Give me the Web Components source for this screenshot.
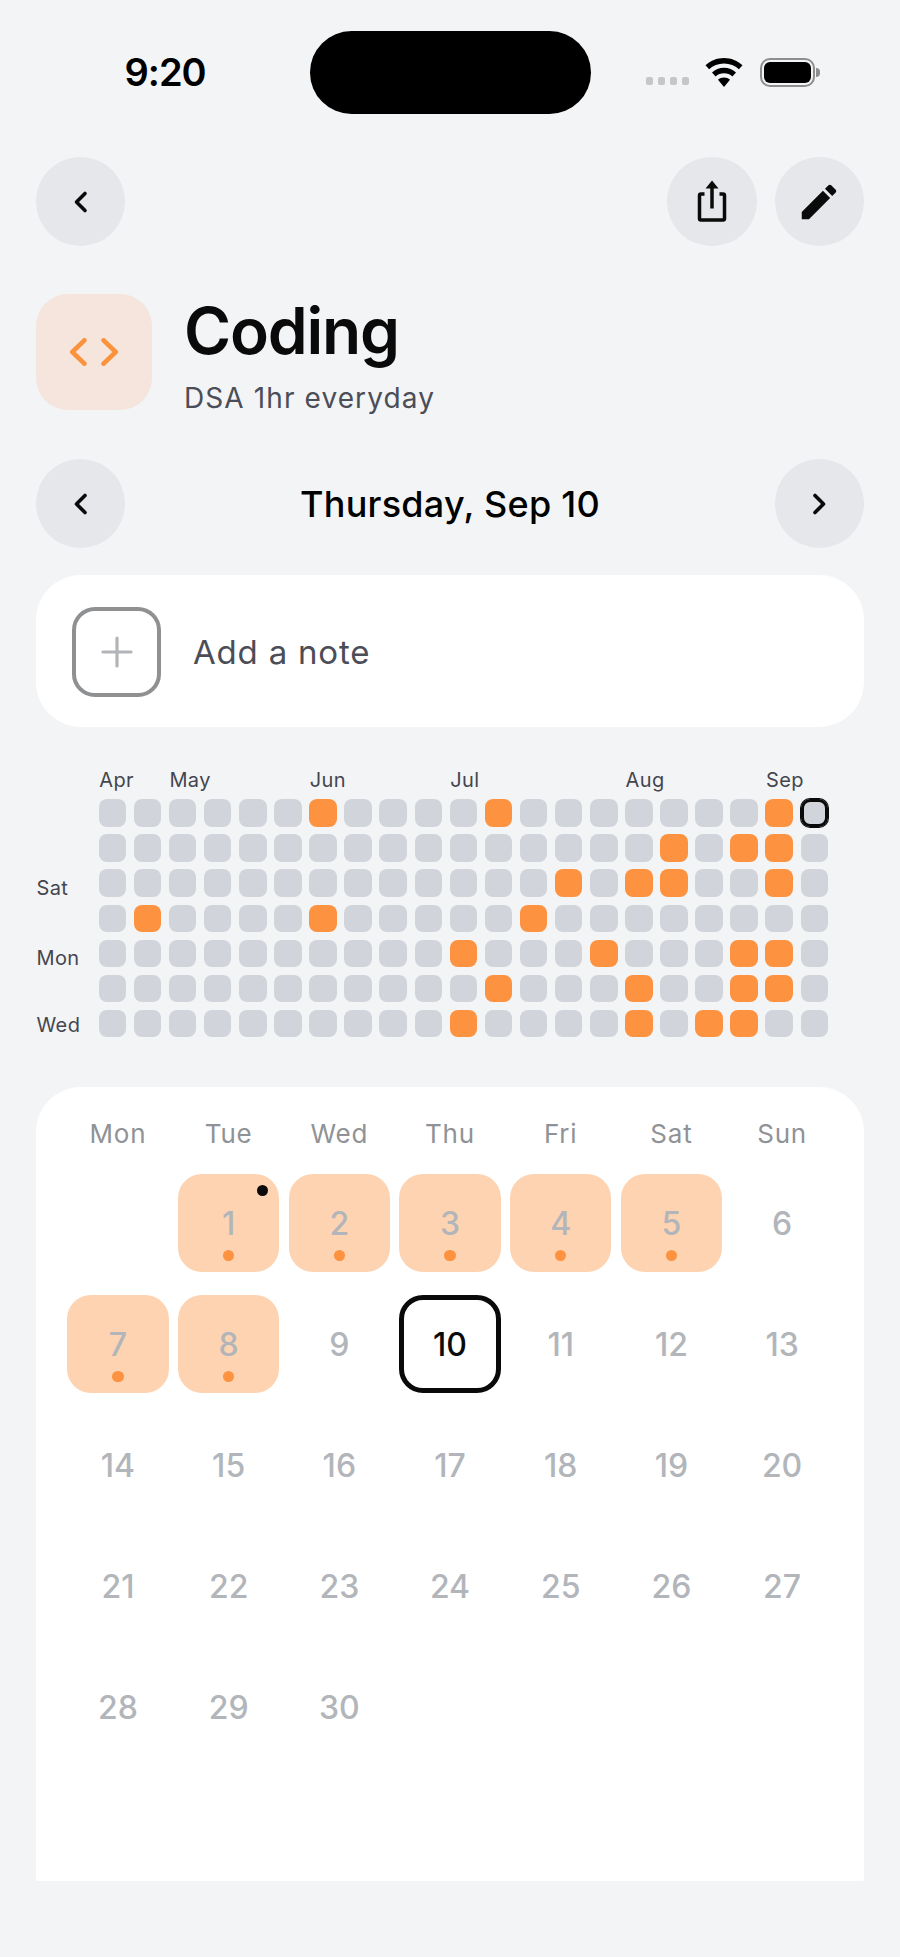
<!DOCTYPE html>
<html lang="en">
<head>
<meta charset="utf-8">
<title>Coding habit</title>
<style>
    html, body { margin: 0; background: #f3f4f6; }
    body { font-family: Inter, "Liberation Sans", sans-serif; color: #0a0a0a; height: 1957px; overflow: hidden; }
    main { display: block; padding: 0 36px; }
</style>
</head>
<body>
<status-bar time="9:20"></status-bar>
<main>
    <top-actions></top-actions>
    <habit-header title="Coding" subtitle="DSA 1hr everyday"></habit-header>
    <date-nav label="Thursday, Sep 10"></date-nav>
    <note-card label="Add a note"></note-card>
    <heat-map></heat-map>
    <month-calendar></month-calendar>
</main>

<script>
const CHEVRON_LEFT = '<svg width="26" height="26" viewBox="0 0 26 26" fill="none" stroke="#0a0a0a" stroke-width="3.6" stroke-linecap="round" stroke-linejoin="round"><path d="M17 4.5 8.5 13l8.5 8.5"/></svg>';
const CHEVRON_RIGHT = '<svg width="26" height="26" viewBox="0 0 26 26" fill="none" stroke="#0a0a0a" stroke-width="3.6" stroke-linecap="round" stroke-linejoin="round"><path d="M9 4.5 17.5 13 9 21.5"/></svg>';

class StatusBar extends HTMLElement {
    constructor() {
        super();
        this.attachShadow({ mode: 'open' });
    }

    connectedCallback() {
        this.shadowRoot.innerHTML = `
            <style>
                :host { display: block; padding-top: 31px; }
                .bar { display: grid; grid-template-columns: 310px 281px 1fr; height: 83px; align-items: center; }
                .time { padding-left: 124.500px; font-size: 38px; font-weight: 600; line-height: 1; letter-spacing: -1px; color: #000; position: relative; top: -1px; }
                .pill { height: 83px; background: #000; border-radius: 42px; }
                .right { display: flex; align-items: center; padding-left: 55px; }
                .dots { display: flex; gap: 5px; margin-top: 16px; }
                .dots i { width: 7px; height: 8px; border-radius: 2px; background: #c6c6c8; }
                .wifi { margin-left: 16px; display: block; }
                .batt { margin-left: 17px; width: 55px; height: 29px; box-sizing: border-box; border: 2.500px solid #8e8e90; border-radius: 10px; padding: 2px; position: relative; }
                .batt b { display: block; height: 100%; background: #000; border-radius: 6px; }
                .batt::after { content: ''; position: absolute; left: 54px; top: 7.500px; width: 4px; height: 9px; background: #8e8e90; border-radius: 0 4px 4px 0; }
            </style>
            <div class="bar">
                <div class="time">${this.getAttribute('time')}</div>
                <div class="pill"></div>
                <div class="right">
                    <div class="dots"><i></i><i></i><i></i><i></i></div>
                    <svg class="wifi" width="38" height="29" viewBox="0 0 38 29">
                        <path d="M19 0C11.8 0 5.4 2.8.5 7.2l3.6 4C8 7.7 13.2 5.6 19 5.6s11 2.100 14.900 5.600l3.600-4C32.600 2.800 26.200 0 19 0z"/>
                        <path d="M19 9.800c-4.600 0-8.800 1.700-12 4.600l3.600 4c2.200-2 5.200-3.200 8.400-3.200s6.200 1.200 8.400 3.200l3.600-4c-3.200-2.900-7.400-4.600-12-4.600z"/>
                        <path d="M19 19.400c-2.300 0-4.400.9-6 2.300L19 29l6-7.300c-1.600-1.400-3.700-2.300-6-2.300z"/>
                    </svg>
                    <div class="batt"><b></b></div>
                </div>
            </div>
        `;
    }
}

class IconButton extends HTMLElement {
    constructor() {
        super();
        this.attachShadow({ mode: 'open' });
        this.shadowRoot.innerHTML = `
            <style>
                :host { display: flex; width: 89.400px; height: 89.400px; flex: none; border-radius: 50%; background: #e5e7eb; align-items: center; justify-content: center; }
                ::slotted(svg) { display: block; }
            </style>
            <slot></slot>
        `;
    }
}

class TopActions extends HTMLElement {
    constructor() {
        super();
        this.attachShadow({ mode: 'open' });
    }

    connectedCallback() {
        this.shadowRoot.innerHTML = `
            <style>
                :host { display: flex; align-items: center; margin-top: 43px; gap: 18px; }
                .spacer { flex: 1; }
            </style>
            <icon-button>${CHEVRON_LEFT}</icon-button>
            <div class="spacer"></div>
            <icon-button>
                <svg width="46" height="46" viewBox="0 0 46 46" fill="none" stroke="#0a0a0a" stroke-width="3.500" style="margin-top:-1px">
                    <path d="M15.500 17.500H12a1.500 1.500 0 0 0-1.500 1.500v23a1.500 1.500 0 0 0 1.500 1.500h22a1.500 1.500 0 0 0 1.500-1.500V19a1.500 1.500 0 0 0-1.500-1.500h-3.500" transform="translate(0 -1.500)"/>
                    <path d="M23 5v25.500"/>
                    <path d="M23 2.500l6.500 8h-13z" fill="#0a0a0a" stroke="none"/>
                </svg>
            </icon-button>
            <icon-button>
                <svg width="46" height="46" viewBox="0 0 24 24" fill="#0a0a0a">
                    <path d="M3 17.250V21h3.750L17.810 9.940l-3.750-3.750L3 17.250zM20.710 7.040c.39-.39.39-1.020 0-1.410l-2.340-2.340c-.39-.39-1.020-.39-1.410 0l-1.830 1.830 3.750 3.750 1.830-1.830z"/>
                </svg>
            </icon-button>
        `;
    }
}

class HabitHeader extends HTMLElement {
    constructor() {
        super();
        this.attachShadow({ mode: 'open' });
    }

    connectedCallback() {
        this.shadowRoot.innerHTML = `
            <style>
                :host { display: flex; align-items: center; gap: 32px; margin-top: 48px; height: 116px; }
                .icon { width: 116px; height: 116px; border-radius: 32px; background: #f5e5dc; display: flex; align-items: center; justify-content: center; flex: none; }
                .text { padding-top: 6px; }
                .title { font-size: 64px; font-weight: 600; line-height: 1; letter-spacing: -1.200px; color: #0a0a0a; }
                .sub { font-size: 28px; line-height: 1; margin-top: 21px; letter-spacing: 1.100px; color: #4b4d57; }
            </style>
            <div class="icon">
                <svg width="48" height="28" viewBox="0 0 48 28" fill="none" stroke="#fb923c" stroke-width="4.600" stroke-linecap="round" stroke-linejoin="round">
                    <path d="M14.400 2.300 2.300 14l12.100 11.700"/><path d="M33.600 2.300 45.700 14 33.600 25.700"/>
                </svg>
            </div>
            <div class="text">
                <div class="title">${this.getAttribute('title')}</div>
                <div class="sub">${this.getAttribute('subtitle')}</div>
            </div>
        `;
    }
}

class DateNav extends HTMLElement {
    constructor() {
        super();
        this.attachShadow({ mode: 'open' });
    }

    connectedCallback() {
        this.shadowRoot.innerHTML = `
            <style>
                :host { display: flex; align-items: center; justify-content: space-between; margin-top: 48.600px; }
                .label { font-size: 36px; font-weight: 500; letter-spacing: 0.25px; color: #000; }
            </style>
            <icon-button>${CHEVRON_LEFT}</icon-button>
            <div class="label">${this.getAttribute('label')}</div>
            <icon-button>${CHEVRON_RIGHT}</icon-button>
        `;
    }
}

class NoteCard extends HTMLElement {
    constructor() {
        super();
        this.attachShadow({ mode: 'open' });
    }

    connectedCallback() {
        this.shadowRoot.innerHTML = `
            <style>
                :host { display: flex; align-items: center; gap: 32px; margin-top: 26.600px; height: 152.500px; box-sizing: border-box; padding: 1.500px 0 0 36px; border-radius: 45px; background: #fff; }
                .plus { width: 89px; height: 90px; box-sizing: border-box; border: 4px solid #8f9092; border-radius: 23px; display: flex; align-items: center; justify-content: center; }
                .text { font-size: 33px; letter-spacing: 0.8px; color: #4b4d57; }
            </style>
            <div class="plus">
                <svg width="34" height="34" viewBox="0 0 34 34" fill="none" stroke="#b2b4b8" stroke-width="3.200" stroke-linecap="round"><path d="M17 3v28M3 17h28"/></svg>
            </div>
            <div class="text">${this.getAttribute('label')}</div>
        `;
    }
}

class HeatMap extends HTMLElement {
    constructor() {
        super();
        this.attachShadow({ mode: 'open' });
        this.filled = [
            [6, 11, 19],
            [16, 18, 19],
            [13, 15, 16, 19],
            [1, 6, 12],
            [10, 14, 18, 19],
            [11, 15, 18, 19],
            [10, 15, 17, 18]
        ];
        this.months = [['Apr', 0], ['May', 2], ['Jun', 6], ['Jul', 10], ['Aug', 15], ['Sep', 19]];
        this.days = [['Sat', 2, -3.5], ['Mon', 4, -3], ['Wed', 6, 0.5]];
    }

    connectedCallback() {
        let html = '';
        this.months.forEach(([name, col]) => {
            html += `<div class="month" style="grid-column:${col + 2}">${name}</div>`;
        });
        this.days.forEach(([name, row, lift]) => {
            html += `<div class="day" style="grid-row:${row + 2};margin-bottom:${lift}px">${name}</div>`;
        });
        this.filled.forEach((cols, row) => {
            for (let col = 0; col < 21; col++) {
                const on = cols.includes(col) ? ' on' : '';
                const today = row === 0 && col === 20 ? ' today' : '';
                html += `<div class="cell${on}${today}" style="grid-row:${row + 2};grid-column:${col + 2}"></div>`;
            }
        });
        this.shadowRoot.innerHTML = `
            <style>
                :host { display: block; margin-top: 36.200px; }
                .grid { display: grid; grid-template-columns: 55.100px repeat(21, 27.500px); grid-template-rows: 28px repeat(7, 27.500px); column-gap: 7.600px; row-gap: 7.600px; }
                .month { grid-row: 1; align-self: end; margin-bottom: 0; font-size: 20px; line-height: 24px; letter-spacing: 0.4px; color: #44464e; white-space: nowrap; margin-left: 0.500px; }
                .day { grid-column: 1; align-self: end; font-size: 20px; line-height: 24px; letter-spacing: 0.4px; color: #44464e; white-space: nowrap; margin-left: 0.500px; }
                .cell { border-radius: 8px; background: #d1d5db; }
                .cell.on { background: #fd9240; }
                .cell.today { border-radius: 9px; box-shadow: inset 0 0 0 3px #0a0a0a, 0 0 0 1px #0a0a0a; }
            </style>
            <div class="grid">${html}</div>
        `;
    }
}

class MonthCalendar extends HTMLElement {
    constructor() {
        super();
        this.attachShadow({ mode: 'open' });
        this.weekdays = ['Mon', 'Tue', 'Wed', 'Thu', 'Fri', 'Sat', 'Sun'];
        this.done = [1, 2, 3, 4, 5, 7, 8];
    }

    connectedCallback() {
        const heads = this.weekdays.map(d => `<div class="head">${d}</div>`).join('');
        let days = '<div></div>';
        for (let d = 1; d <= 30; d++) {
            let cls = 'day';
            if (this.done.includes(d)) cls += ' done';
            if (d === 10) cls += ' today';
            const note = d === 1 ? '<i class="note"></i>' : '';
            const mark = this.done.includes(d) ? '<i class="mark"></i>' : '';
            days += `<div class="${cls}">${d}${note}${mark}</div>`;
        }
        this.shadowRoot.innerHTML = `
            <style>
                :host { display: block; margin-top: 49.500px; height: 794px; box-sizing: border-box; padding: 31px 31.300px 0; background: #fff; border-radius: 45px 45px 2px 2px; }
                .heads, .days { display: grid; grid-template-columns: repeat(7, 101.300px); column-gap: 9.400px; }
                .head { text-align: center; font-size: 26px; line-height: 32px; letter-spacing: 0.8px; color: #8f9296; }
                .days { grid-auto-rows: 98.500px; row-gap: 22.500px; margin-top: 24px; }
                .day { position: relative; display: flex; align-items: center; justify-content: center; box-sizing: border-box; border-radius: 24px; font-size: 32px; font-weight: 500; color: #b2b5ba; }
                .day.done { background: #fed3b1; }
                .day.today { border: 5px solid #0a0a0a; color: #0a0a0a; }
                .mark { position: absolute; left: 50%; bottom: 11px; width: 11.500px; height: 11.500px; margin-left: -5.750px; border-radius: 50%; background: #fd9240; }
                .note { position: absolute; right: 11px; top: 11px; width: 11.500px; height: 11.500px; border-radius: 50%; background: #0a0a0a; }
            </style>
            <div class="heads">${heads}</div>
            <div class="days">${days}</div>
        `;
    }
}

customElements.define('status-bar', StatusBar);
customElements.define('icon-button', IconButton);
customElements.define('top-actions', TopActions);
customElements.define('habit-header', HabitHeader);
customElements.define('date-nav', DateNav);
customElements.define('note-card', NoteCard);
customElements.define('heat-map', HeatMap);
customElements.define('month-calendar', MonthCalendar);
</script>
</body>
</html>
